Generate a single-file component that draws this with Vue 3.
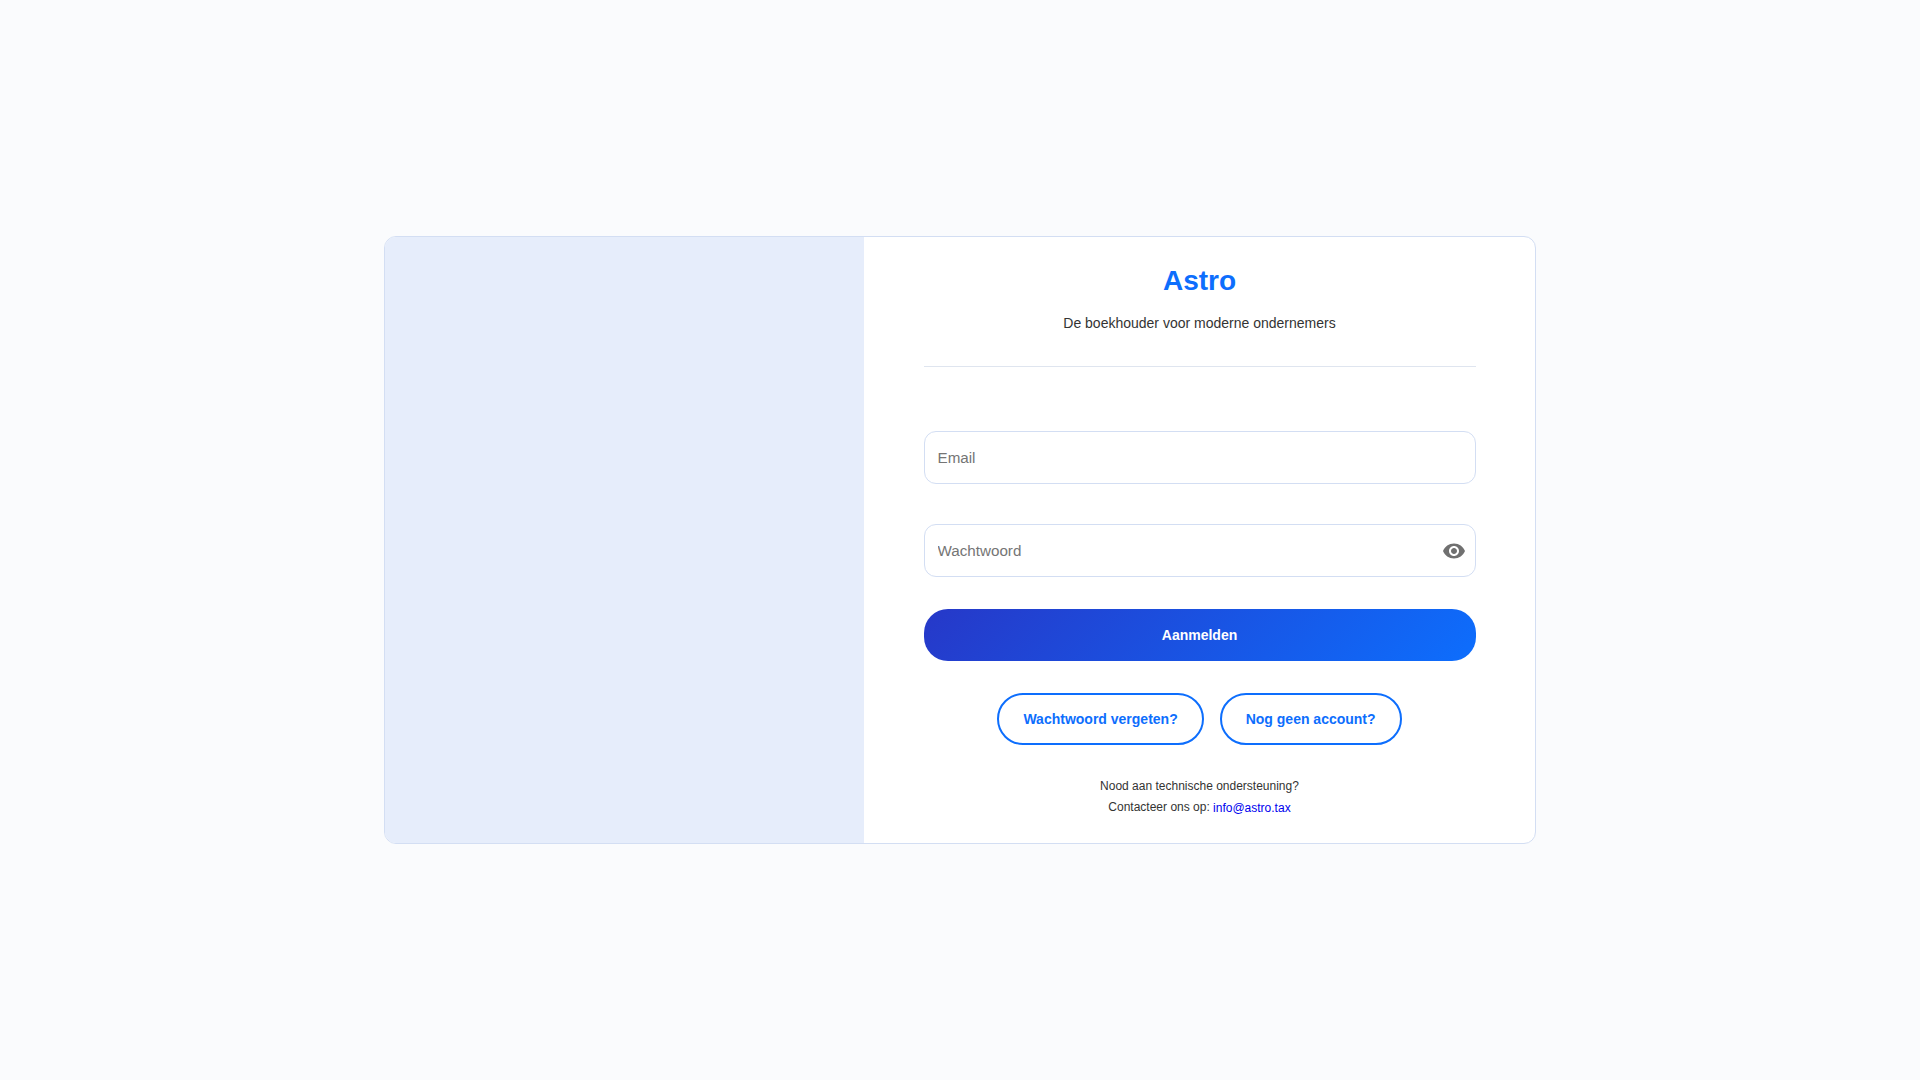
<script setup>
const title = 'Astro'
</script>

<template>
  <main class="page">
    <section class="card">
      <div class="side"></div>
      <div class="panel">
        <header class="head">
          <h1 class="title">{{ title }}</h1>
          <p class="sub">De boekhouder voor moderne ondernemers</p>
        </header>
        <form class="form" @submit.prevent>
          <input class="field" placeholder="Email" />
          <div class="pw">
            <input class="field" placeholder="Wachtwoord" />
            <svg class="eye" viewBox="0 0 24 24" width="24" height="24" fill="#707070">
              <path d="M12 4.5C7 4.5 2.73 7.61 1 12c1.73 4.39 6 7.5 11 7.5s9.27-3.11 11-7.5c-1.73-4.39-6-7.5-11-7.5zM12 17c-2.76 0-5-2.24-5-5s2.24-5 5-5 5 2.24 5 5-2.24 5-5 5zm0-8c-1.66 0-3 1.34-3 3s1.34 3 3 3 3-1.34 3-3-1.34-3-3-3z"/>
            </svg>
          </div>
          <button class="primary">Aanmelden</button>
          <div class="links">
            <button class="outline">Wachtwoord vergeten?</button>
            <button class="outline">Nog geen account?</button>
          </div>
        </form>
        <footer class="foot">
          <div>Nood aan technische ondersteuning?</div>
          <div>Contacteer ons op: <a href="#" class="mail">info@astro.tax</a></div>
        </footer>
      </div>
    </section>
  </main>
</template>

<style scoped>
.page { min-height: 1080px; background: #fafbfd; display: flex; align-items: center; justify-content: center; font-family: "Liberation Sans", Arial, sans-serif; }
.card { width: 1152px; height: 608px; box-sizing: border-box; border: 1px solid #d3def3; border-radius: 12px; background: #fff; display: flex; overflow: hidden; }
.side { width: 479px; background: #e6edfb; flex: none; }
.panel { flex: 1; padding: 0 59.5px; display: flex; flex-direction: column; min-width: 0; }
.head { text-align: center; border-bottom: 1px solid #dfe5ef; height: 129px; }
.title { margin: 27px 0 0; font-size: 28px; line-height: 34px; font-weight: 700; color: #0d6efd; }
.sub { margin: 15px 0 0; font-size: 14px; line-height: 20px; color: #333; }
.form { display: flex; flex-direction: column; margin-top: 64px; }
.field { width: 100%; height: 53px; box-sizing: border-box; border: 1px solid #d3def3; border-radius: 12px; padding: 0 13px; font-size: 15.2px; font-family: inherit; background: #fff; outline: none; }
.field::placeholder { color: #757575; }
.pw { position: relative; margin-top: 40px; }
.eye { position: absolute; right: 10px; top: 15px; }
.primary { margin-top: 32px; height: 52px; border: 0; border-radius: 24px; color: #fff; font: 700 14px "Liberation Sans", Arial, sans-serif; background: linear-gradient(135deg, #2638c8, #0d6efd); }
.links { display: flex; justify-content: center; gap: 16px; margin-top: 32px; }
.outline { height: 52px; padding: 0 24px; background: #fff; border: 2px solid #0d6efd; border-radius: 26px; color: #0d6efd; font: 700 14px "Liberation Sans", Arial, sans-serif; }
.foot { text-align: center; font-size: 12px; line-height: 21px; color: #333; margin-top: 31px; }
.mail { color: #0000ee; text-decoration: none; position: relative; top: 1px; }
</style>
